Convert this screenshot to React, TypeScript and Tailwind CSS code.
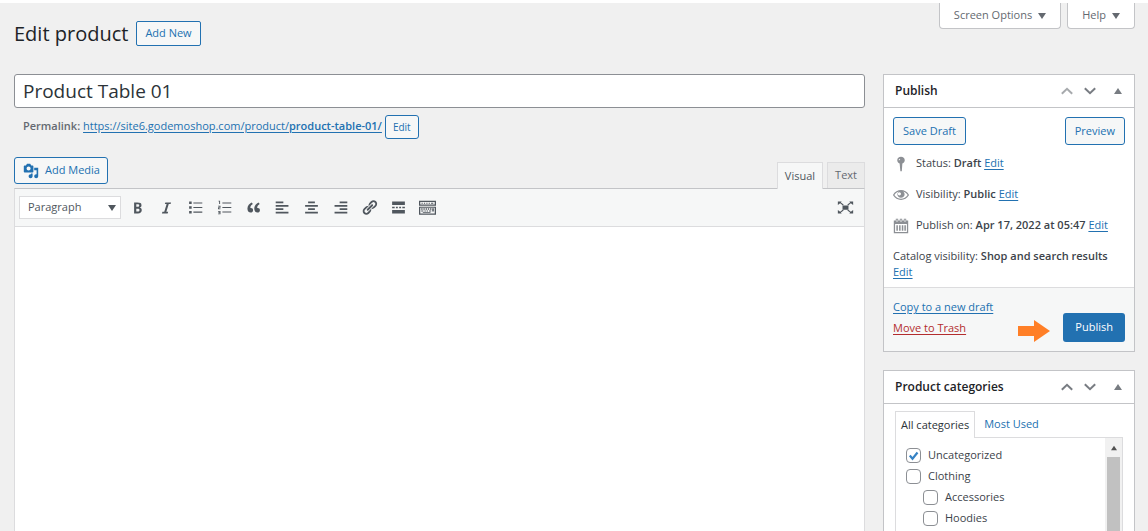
import { useState, type ReactNode } from "react";

const ICONS = {
  bold: "M6 4v13h4.54c1.37 0 2.46-.33 3.26-1 .8-.66 1.2-1.58 1.2-2.77 0-.84-.17-1.51-.51-2.01s-.9-.85-1.67-1.03v-.09c.57-.1 1.02-.4 1.36-.9s.51-1.13.51-1.91c0-1.14-.39-1.98-1.17-2.5C12.75 4.26 11.5 4 9.78 4H6zm2.57 5.15V6.26h1.36c.73 0 1.27.11 1.61.32.34.22.51.58.51 1.07 0 .54-.16.92-.47 1.15s-.82.35-1.51.35h-1.5zm0 2.19h1.6c1.44 0 2.16.53 2.16 1.61 0 .6-.17 1.05-.51 1.34s-.86.43-1.57.43H8.57v-3.38z",
  italic: "M14.78 6h-2.13l-2.8 9h2.12l-.62 2H4.6l.62-2h2.14l2.8-9H8.03l.62-2h6.75z",
  quote:
    "M9.49 13.22c0-.74-.2-1.38-.61-1.9-.62-.78-1.83-.88-2.53-.72-.29-1.65 1.11-3.75 2.92-4.65L7.88 4c-2.73 1.3-5.42 4.28-4.96 8.05C3.21 14.43 4.59 16 6.54 16c.85 0 1.56-.25 2.12-.75s.83-1.18.83-2.03zm8.05 0c0-.74-.2-1.38-.61-1.9-.63-.78-1.83-.88-2.53-.72-.29-1.65 1.11-3.75 2.92-4.65L15.93 4c-2.73 1.3-5.41 4.28-4.95 8.05.29 2.38 1.66 3.95 3.61 3.95.85 0 1.56-.25 2.12-.75s.83-1.18.83-2.03z",
  bullets:
    "M2.5 3h3v3h-3zM2.5 8.5h3v3h-3zM2.5 14h3v3h-3zM7.5 4h10.5v1.3H7.5zM7.5 9.4h10.5v1.3H7.5zM7.5 14.8h10.5v1.3H7.5z",
  numbers:
    "M3 2h1.8v4H3.7V3H3zM2.4 8h2.9v2.4H3.7v.7h1.6v.9H2.4V9.6h1.7v-.7H2.4zM2.4 14h2.9v4H2.4v-.9h1.8v-.7H2.8v-.8h1.4v-.7H2.4zM7.5 4h10.5v1.2H7.5zM7.5 9.4h10.5v1.2H7.5zM7.5 14.8h10.5v1.2H7.5z",
  left: "M2 3h9v2H2zM2 7h15v2H2zM2 11h9v2H2zM2 15h15v2H2z",
  center: "M6 3h8v2H6zM2.5 7h15v2h-15zM6 11h8v2H6zM2.5 15h15v2h-15z",
  right: "M9 3h9v2H9zM3 7h15v2H3zM9 11h9v2H9zM3 15h15v2H3z",
  link: "M17.74 2.76c1.68 1.69 1.68 4.41 0 6.1l-1.53 1.52c-1.12 1.12-2.7 1.47-4.14 1.09l2.62-2.61.76-.77.76-.76c.84-.84.84-2.2 0-3.04-.84-.85-2.2-.85-3.04 0l-.77.76-3.38 3.38c-.37-1.44-.02-3.02 1.1-4.14l1.52-1.53c1.69-1.68 4.42-1.68 6.1 0zM8.59 13.43l5.34-5.34c.42-.42.42-1.1 0-1.52-.44-.43-1.13-.39-1.53 0l-5.33 5.34c-.42.42-.42 1.1 0 1.52.44.43 1.13.39 1.52 0zm-.76 2.29l4.14-4.15c.38 1.44.03 3.02-1.09 4.14l-1.52 1.53c-1.69 1.68-4.41 1.68-6.1 0-1.68-1.68-1.68-4.42 0-6.1l1.53-1.52c1.12-1.12 2.7-1.47 4.14-1.1l-4.14 4.15c-.85.84-.85 2.2 0 3.05.84.84 2.2.84 3.04 0z",
  more: "M17.500 3v4h-15V3zM2.500 9h3v2h-3zM7 9h2.200v2H7zM10.800 9H13v2h-2.200zM14.500 9h3v2h-3zM2.500 13h15v4h-15z",
  keyboard:
    "M0 2h20v6H0zM1.5 3.5v3h17v-3zM0 9h20v9.5H0zM1.5 10.2v6.8h17v-6.8zM3 4.4h1.4v1.3H3zM5.8 4.4h1.4v1.3H5.8zM8.6 4.4H10v1.3H8.6zM11.4 4.4h1.4v1.3h-1.4zM14.2 4.4h2.6v1.3h-2.6zM2.6 11h1.6v1.5H2.6zM5.2 11h1.6v1.5H5.2zM7.8 11h1.6v1.5H7.8zM10.4 11H12v1.5h-1.6zM13 11h1.6v1.5H13zM15.6 11h1.8v3.8h-1.8zM2.6 13.4h2.6v1.4H2.6zM6.4 13.4H8v1.4H6.4zM9 13.4h1.6v1.4H9zM11.8 13.4h2.6v1.4h-2.6zM4.5 15.5h9v1h-9z",
  media:
    "M13 11V4c0-.55-.45-1-1-1h-1.67L9 1H5L3.67 3H2c-.55 0-1 .45-1 1v7c0 .55.45 1 1 1h10c.55 0 1-.45 1-1zM7 4.5c1.38 0 2.5 1.12 2.5 2.5S8.38 9.5 7 9.5 4.5 8.38 4.5 7 5.62 4.5 7 4.5zM14 6h5v10.5c0 1.38-1.12 2.5-2.5 2.5S14 17.88 14 16.5s1.12-2.5 2.5-2.5c.17 0 .34.02.5.05V9h-3V6zm-4 8.05V13h2v3.5c0 1.38-1.12 2.5-2.5 2.5S7 17.88 7 16.5 8.12 14 9.5 14c.17 0 .34.02.5.05z",
  expand:
    "M6.500 7.500h7v5h-7zM1 3h4.500L4.600 4.100l3.200 2.500-.8 1-3.300-2.600L1 7zM19 3h-4.500l.9 1.100-3.200 2.500.8 1 3.300-2.600L19 7zM1 17h4.500l-.9-1.100 3.200-2.500-.8-1-3.300 2.600L1 13zM19 17h-4.500l.9-1.100-3.200-2.500.8-1 3.300 2.600L19 13z",
  pin: "M10 1c2.700 0 4.700 1.900 4.700 4.300 0 1.900-1.200 3.500-3 4.100L11 19H9.200L8.300 9.400c-1.800-.6-3-2.200-3-4.100C5.300 2.900 7.300 1 10 1zM8.300 3.300C7.500 3.700 7 4.500 7 5.400h1.200c0-.6.400-1 .9-1.300z",
  eye: "M19.700 9.400C17.700 6 14 3.900 10 3.900S2.300 6 .3 9.400L0 10l.3.600c2 3.400 5.700 5.500 9.700 5.500s7.700-2.100 9.700-5.500l.3-.6zM10 14.700c-3.300 0-6.600-1.900-8.300-4.700C3 7.800 5.200 6.200 7.500 5.600 6.300 6.300 5.500 7.600 5.500 9c0 2.500 2 4.500 4.500 4.500s4.500-2 4.500-4.500c0-1.400-.8-2.700-2-3.400 2.300.6 4.500 2.200 5.800 4.400-1.700 2.800-5 4.700-8.300 4.700zM8 6.500a2 2 0 1 0 2 2 2 2 0 0 0-2-2z",
  calendar:
    "M1 3h2.500V.8h3V3h2V.8h3V3h2V.8h3V3H19v16H1zM2.600 7.500v9.900h14.800V7.500zM4.200 9h1.900v7H4.200zM7.600 9h1.900v7H7.600zM11 9h1.900v7H11zM14.200 9h1.900v7h-1.900zM4.500 2v3h1V2zM9.500 2v3h1V2zM14.500 2v3h1V2z",
};

type IconName = keyof typeof ICONS;

function Icon({ name, className }: { name: IconName; className: string }) {
  return (
    <svg viewBox="0 0 20 20" fill="currentColor" fillRule="evenodd" aria-hidden="true" className={"shrink-0 " + className}>
      <path d={ICONS[name]} />
    </svg>
  );
}

function Triangle({ up = false, className = "w-2 h-2" }: { up?: boolean; className?: string }) {
  return (
    <svg viewBox="0 0 8 8" fill="currentColor" aria-hidden="true" className={"shrink-0 " + className}>
      <path d={up ? "M4 1l4 6H0z" : "M0 1h8L4 7z"} />
    </svg>
  );
}

function Chevron({ up = false }: { up?: boolean }) {
  return (
    <svg viewBox="0 0 12 8" fill="none" stroke="currentColor" strokeWidth="2" aria-hidden="true" className="h-2 w-3">
      <path d={up ? "M.8 6.800L6 1.800l5.200 5" : "M.8 1.200L6 6.200l5.200-5"} />
    </svg>
  );
}

function A({ children, className = "text-[#2271b1]" }: { children: ReactNode; className?: string }) {
  return (
    <a href="#" className={"underline underline-offset-2 " + className}>
      {children}
    </a>
  );
}

const outline = "rounded-[3px] border border-[#2271b1] bg-[#f6f7f7] text-[#2271b1] ";

function ScreenTab({ children }: { children: ReactNode }) {
  return (
    <button className="flex h-[26px] items-center gap-[6px] rounded-b border border-t-0 border-[#c3c4c7] bg-white px-[14px] text-[#646970]">
      {children}
      <Triangle />
    </button>
  );
}

function BoxHeader({ title, first = false }: { title: string; first?: boolean }) {
  return (
    <div className="flex h-[33px] items-center border-b border-[#c3c4c7] pl-[11px] pr-3 text-[#787c82]">
      <h2 className="flex-1 text-[12px] font-semibold text-[#1d2327]">{title}</h2>
      <button aria-label="Move up" className={first ? "text-[#a7aaad]" : ""}>
        <Chevron up />
      </button>
      <button aria-label="Move down" className="ml-[11px]">
        <Chevron />
      </button>
      <button aria-label={"Toggle " + title} className="ml-[18px]">
        <Triangle up className="h-2 w-2" />
      </button>
    </div>
  );
}

function StatusRow({ icon, label, value }: { icon: IconName; label: string; value: string }) {
  return (
    <div className="flex h-[31px] items-center gap-[7px]">
      <Icon name={icon} className="h-4 w-4 text-[#8c8f94]" />
      <span>
        {label} <b className="font-semibold">{value}</b> <A>Edit</A>
      </span>
    </div>
  );
}

function Category({ name, child = false, on = false }: { name: string; child?: boolean; on?: boolean }) {
  const [checked, setChecked] = useState(on);
  return (
    <label className={"flex h-[21px] items-center gap-[7px] " + (child ? "pl-[17px]" : "")}>
      <span className="relative flex">
        <input
          type="checkbox"
          checked={checked}
          onChange={(e) => setChecked(e.target.checked)}
          className="h-[15px] w-[15px] appearance-none rounded border border-[#8c8f94] bg-white"
        />
        {checked && (
          <svg viewBox="0 0 15 15" aria-hidden="true" className="pointer-events-none absolute inset-0 text-[#3582c4]">
            <path d="M3.800 7.500l2.700 3.200 5-6.200" fill="none" stroke="currentColor" strokeWidth="2.200" />
          </svg>
        )}
      </span>
      {name}
    </label>
  );
}

const TOOLS: { icon: IconName; label: string }[] = [
  { icon: "bold", label: "Bold" },
  { icon: "italic", label: "Italic" },
  { icon: "bullets", label: "Bulleted list" },
  { icon: "numbers", label: "Numbered list" },
  { icon: "quote", label: "Blockquote" },
  { icon: "left", label: "Align left" },
  { icon: "center", label: "Align center" },
  { icon: "right", label: "Align right" },
  { icon: "link", label: "Insert link" },
  { icon: "more", label: "Insert Read More tag" },
  { icon: "keyboard", label: "Toolbar toggle" },
];

function Editor() {
  return (
    <section className="flex flex-1 flex-col pt-[18px]">
      <div className="flex items-start justify-between">
        <button className={outline + "flex h-[27px] items-center gap-[6px] pl-2 pr-[7px] text-[12px]"}>
          <Icon name="media" className="h-4 w-4" />
          <span className="text-[11px]">Add Media</span>
        </button>
        <div className="flex gap-1 pt-[5px] text-[#646970]">
          <button className="relative z-10 -mb-px h-[27px] border border-b-0 border-[#dcdcde] bg-[#f6f7f7] px-[7px] text-[#50575e]">
            Visual
          </button>
          <button className="h-[26px] border border-b-0 border-[#dcdcde] bg-[#ebebeb] px-[7px]">Text</button>
        </div>
      </div>
      <div className="flex flex-1 flex-col border border-[#dcdcde] border-t-[#c3c4c7] bg-white">
        <div className="flex h-[38px] items-center border-b border-[#dcdcde] bg-[#f6f7f7] pl-1 pr-[10px] text-[#50575e]">
          <span className="relative mr-[2px] flex items-center">
            <select
              aria-label="Paragraph format"
              className="h-[23px] w-[102px] appearance-none border border-[#dcdcde] bg-white pl-2"
            >
              <option>Paragraph</option>
            </select>
            <Triangle className="pointer-events-none absolute right-[5px] h-2 w-2" />
          </span>
          {TOOLS.map((t) => (
            <button key={t.icon} aria-label={t.label} className="flex w-[29px] justify-center">
              <Icon name={t.icon} className="h-[17px] w-[17px]" />
            </button>
          ))}
          <button aria-label="Distraction-free mode" className="ml-auto">
            <Icon name="expand" className="h-[17px] w-[17px]" />
          </button>
        </div>
        <textarea aria-label="Product description" className="flex-1 resize-none outline-none" />
      </div>
    </section>
  );
}

function PublishBox() {
  return (
    <section className="border border-[#c3c4c7] bg-white">
      <BoxHeader title="Publish" first />
      <div className="px-[9px] pb-[7px] pt-[9px]">
        <div className="mb-[3px] flex justify-between">
          <button className={outline + "h-7 px-[9px]"}>Save Draft</button>
          <button className={outline + "h-7 px-[9px]"}>Preview</button>
        </div>
        <StatusRow icon="pin" label="Status:" value="Draft" />
        <StatusRow icon="eye" label="Visibility:" value="Public" />
        <StatusRow icon="calendar" label="Publish on:" value="Apr 17, 2022 at 05:47" />
        <p className="pt-[7px] leading-4">
          Catalog visibility: <b className="font-semibold">Shop and search results</b> <A>Edit</A>
        </p>
      </div>
      <div className="flex h-16 items-end border-t border-[#dcdcde] bg-[#f6f7f7] px-[9px] pb-[9px]">
        <div className="flex flex-1 flex-col items-start pb-1 leading-[21px]">
          <A>Copy to a new draft</A>
          <A className="text-[#b32d2e]">Move to Trash</A>
        </div>
        <svg viewBox="0 0 32 22" aria-hidden="true" className="mr-[13px] h-[22px] w-8 text-[#ff7f27]">
          <path d="M0 6h16V0l16 11-16 11v-6H0z" fill="currentColor" />
        </svg>
        <button className="h-[29px] rounded-[3px] bg-[#2271b1] px-3 text-white">Publish</button>
      </div>
    </section>
  );
}

function CategoriesBox() {
  return (
    <section className="border border-[#c3c4c7] bg-white">
      <BoxHeader title="Product categories" />
      <div className="px-[11px] pb-3 pt-[7px]">
        <div className="flex">
          <button className="relative z-10 -mb-px h-[27px] border border-b-0 border-[#dcdcde] bg-white px-[5px] text-[#2c3338]">
            All categories
          </button>
          <button className="h-[26px] px-[9px] text-[#2271b1]">Most Used</button>
        </div>
        <div className="flex h-[190px] overflow-hidden border border-[#dcdcde]">
          <div className="flex-1 pl-[10px] pt-[7px]">
            <Category name="Uncategorized" on />
            <Category name="Clothing" />
            <Category name="Accessories" child />
            <Category name="Hoodies" child />
          </div>
          <div className="flex w-[17px] flex-col items-center bg-[#f1f1f1] text-[#505050]">
            <span className="flex h-[19px] items-center">
              <Triangle up className="h-[6px] w-2" />
            </span>
            <span className="h-[110px] w-[13px] bg-[#c1c1c1]" />
          </div>
        </div>
      </div>
    </section>
  );
}

export default function App() {
  return (
    <div className="flex h-screen flex-col overflow-hidden border-t-[3px] border-white bg-[#f0f0f0] pl-[14px] pr-[13px] font-['Open_Sans',sans-serif] text-[11px] text-[#3c434a]">
      <header className="flex h-[71px] shrink-0 items-start justify-between">
        <div className="flex items-center gap-2 pt-[18px]">
          <h1 className="text-[20px] leading-[25px] text-[#1d2327]">Edit product</h1>
          <button className="h-[25px] rounded-[2px] border border-[#2271b1] bg-[#f6f7f7] px-2 font-medium text-[#2271b1]">
            Add New
          </button>
        </div>
        <div className="flex gap-[6px]">
          <ScreenTab>Screen Options</ScreenTab>
          <ScreenTab>Help</ScreenTab>
        </div>
      </header>
      <div className="grid min-h-0 flex-1 grid-cols-[minmax(0,1fr)_252px] gap-[18px]">
        <main className="flex flex-col">
          <input
            aria-label="Product name"
            defaultValue="Product Table 01"
            className="h-[34px] w-full rounded-[3px] border border-[#8c8f94] bg-white px-2 text-[19px] text-[#2c3338]"
          />
          <div className="flex h-[31px] items-end gap-[3px] pl-[9px] text-[#646970]">
            <span className="pb-[5px]">
              <b className="font-semibold">Permalink:</b>{" "}
              <A>
                https://site6.godemoshop.com/product/<b className="font-semibold">product-table-01/</b>
              </A>
            </span>
            <button className={outline + "h-6 px-[7px] text-[10px]"}>Edit</button>
          </div>
          <Editor />
        </main>
        <aside className="flex flex-col gap-[18px]">
          <PublishBox />
          <CategoriesBox />
        </aside>
      </div>
    </div>
  );
}
